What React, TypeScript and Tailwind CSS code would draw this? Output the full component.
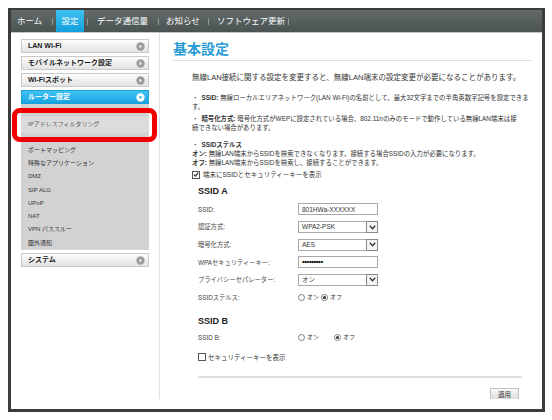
import React from 'react';

// Router admin page: 基本設定 (LAN Wi-Fi basic settings) with sidebar menu

function NavSep() {
  return (
    <div className="flex items-center">
      <span className="h-[7px] w-px bg-[#8e9696]" />
    </div>
  );
}

function MenuIcon({ active }: { active?: boolean }) {
  if (active) {
    return (
      <svg width="9" height="9" viewBox="0 0 10 10">
        <circle cx="5" cy="5" r="4.6" fill="#ffffff" />
        <path d="M2.8 4 L5 6.4 L7.2 4 Z" fill="#1aa7e4" />
      </svg>
    );
  }
  return (
    <svg width="9" height="9" viewBox="0 0 10 10">
      <circle cx="5" cy="5" r="4.6" fill="#9b9b9b" />
      <path d="M4 2.8 L6.4 5 L4 7.2 Z" fill="#ffffff" />
    </svg>
  );
}

function MenuItem({ label, active }: { label: string; active?: boolean }) {
  return (
    <div
      className={
        active
          ? 'flex h-[14px] items-center justify-between border border-[#1b9fd8] bg-gradient-to-b from-[#3fc4f3] to-[#15a4e2] pl-[6px] pr-[3px] text-[7px] font-bold text-white'
          : 'flex h-[14px] items-center justify-between border border-[#cacaca] bg-gradient-to-b from-[#fcfcfc] to-[#e3e3e3] pl-[6px] pr-[3px] text-[7px] font-bold text-[#1a1a1a]'
      }
    >
      <span>{label}</span>
      <MenuIcon active={active} />
    </div>
  );
}

const subItems = ['ポートマッピング', '特殊なアプリケーション', 'DMZ', 'SIP ALG', 'UPnP', 'NAT', 'VPN パススルー', '圏外通知'];

function Radio({ checked }: { checked?: boolean }) {
  return (
    <span className="flex h-[7px] w-[7px] items-center justify-center rounded-full border border-[#808080] bg-white">
      {checked && <span className="h-[3px] w-[3px] rounded-full bg-[#333]" />}
    </span>
  );
}

function Checkbox({ checked }: { checked?: boolean }) {
  return (
    <span className="flex h-[8px] w-[8px] shrink-0 items-center justify-center border border-[#555] bg-white">
      {checked && (
        <svg width="7" height="7" viewBox="0 0 8 8">
          <path d="M1 4 L3.2 6.2 L7 1.5" stroke="#222" strokeWidth="1.4" fill="none" />
        </svg>
      )}
    </span>
  );
}

function TextBox({ children }: { children: React.ReactNode }) {
  return (
    <div className="flex h-[12px] w-[80px] items-center border border-[#a9a9a9] bg-white pl-[3px] text-[6.5px] text-[#333]">
      {children}
    </div>
  );
}

function Select({ value }: { value: string }) {
  return (
    <div className="flex h-[12px] w-[80px] items-center justify-between border border-[#a9a9a9] bg-white pl-[3px] text-[6.5px] text-[#333]">
      <span>{value}</span>
      <span className="-mr-px flex h-[12px] w-[12px] items-center justify-center border border-[#8a8a8a] bg-[#f4f4f4]">
        <svg width="7" height="5" viewBox="0 0 7 5">
          <path d="M0.8 0.8 L3.5 3.8 L6.2 0.8" stroke="#333" strokeWidth="1.3" fill="none" />
        </svg>
      </span>
    </div>
  );
}

function Row({ label, children }: { label: string; children: React.ReactNode }) {
  return (
    <div className="flex h-[17.6px] items-center">
      <div className="w-[100px] text-[6.3px] text-[#444]">{label}</div>
      {children}
    </div>
  );
}

function RadioPair({ gap }: { gap: string }) {
  return (
    <div className="flex items-center text-[6px] text-[#333]">
      <Radio />
      <span className="ml-[2px]">オン</span>
      <span className={gap}>
        <Radio checked />
      </span>
      <span className="ml-[2px]">オフ</span>
    </div>
  );
}

export default function App() {
  return (
    <div className="h-[420px] w-[552px] bg-white p-[8px] font-['Liberation_Sans','Noto_Sans_CJK_JP',sans-serif]">
      <div className="flex h-[404px] w-[537px] flex-col border-x-[3px] border-b-[3px] border-t-2 border-[#3b3b3b]">
        {/* top navigation */}
        <nav className="flex h-[23px] shrink-0 items-stretch border-b border-[#c2c6c6] bg-gradient-to-b from-[#636c6b] to-[#4a5352] text-[8.5px] text-white">
          <div className="flex w-[41px] items-center pl-[6px]">ホーム</div>
          <NavSep />
          <div className="w-[3px]" />
          <div className="flex w-[28px] items-center justify-center bg-gradient-to-b from-[#3cc3f2] to-[#109fdc]">設定</div>
          <div className="w-[3px]" />
          <NavSep />
          <div className="flex w-[70px] items-center pl-[9px]">データ通信量</div>
          <NavSep />
          <div className="flex w-[49px] items-center pl-[7px]">お知らせ</div>
          <NavSep />
          <div className="flex w-[79px] items-center pl-[8px]">ソフトウェア更新</div>
          <NavSep />
        </nav>

        <div className="flex min-h-0 flex-1 pb-[10px]">
          {/* side menu */}
          <aside className="w-[149px] shrink-0 border-r border-[#e2e2e2] px-[10px] pt-[6px]">
            <div className="flex flex-col gap-[3px]">
              <MenuItem label="LAN Wi-Fi" />
              <MenuItem label="モバイルネットワーク設定" />
              <MenuItem label="Wi-Fiスポット" />
              <div>
                <MenuItem label="ルーター設定" active />
                <div className="relative h-[146px] bg-[#d2d2d2] pt-[12px]">
                  <div className="flex h-[17px] items-center bg-[#dcdcdc] pl-[7px] text-[6px] text-[#555]">
                    IPアドレスフィルタリング
                  </div>
                  <div className="mt-[10.5px] flex flex-col">
                    {subItems.map((s) => (
                      <div key={s} className="flex h-[13.3px] items-center pl-[7px] text-[6px] text-[#333]">
                        {s}
                      </div>
                    ))}
                  </div>
                  <div className="absolute left-[-9px] top-[4px] h-[34px] w-[145px] rounded-[8px] border-[5px] border-[#f20000]" />
                </div>
              </div>
              <MenuItem label="システム" />
            </div>
          </aside>

          {/* main content */}
          <main className="min-w-0 flex-1 overflow-hidden pl-[13px] pr-[10px] pt-[8px] text-[#333]">
            <h1 className="text-[14px] font-bold leading-[16px] text-[#2a9bd7]">基本設定</h1>
            <div className="mt-[3px] h-px bg-[#e0e0e0]" />

            <div className="pl-[19px] text-[6.4px] leading-[9px]">
              <p className="mt-[12px] whitespace-nowrap text-[7.5px]">
                無線LAN接続に関する設定を変更すると、無線LAN端末の設定変更が必要になることがあります。
              </p>
              <div className="mt-[11px] whitespace-nowrap">
                <div>
                  <span className="mr-[3px]">・</span>
                  <b>SSID:</b> 無線ローカルエリアネットワーク(LAN Wi-Fi)の名前として、最大32文字までの半角英数字記号を設定できま
                </div>
                <div>す。</div>
              </div>
              <div className="mt-[3px] whitespace-nowrap">
                <div>
                  <span className="mr-[3px]">・</span>
                  <b>暗号化方式:</b> 暗号化方式がWEPに設定されている場合、802.11nのみのモードで動作している無線LAN端末は接
                </div>
                <div>続できない場合があります。</div>
              </div>
              <div className="mt-[8px] whitespace-nowrap">
                <div>
                  <span className="mr-[3px]">・</span>
                  <b>SSIDステルス</b>
                </div>
                <div>
                  <b>オン:</b> 無線LAN端末からSSIDを検索できなくなります。接続する場合SSIDの入力が必要になります。
                </div>
                <div>
                  <b>オフ:</b> 無線LAN端末からSSIDを検索し、接続することができます。
                </div>
              </div>
              <div className="mt-[3px] flex h-[9px] items-center gap-[3px] whitespace-nowrap text-[6.5px]">
                <Checkbox checked />
                <span>端末にSSIDとセキュリティーキーを表示</span>
              </div>
            </div>

            <div className="pl-[25px] pr-[10px]">
              <h2 className="mt-[7px] text-[9px] font-bold leading-[11px] text-[#222]">SSID A</h2>
              <div className="mt-[3.7px] flex flex-col">
                <Row label="SSID:">
                  <TextBox>801HWa-XXXXXX</TextBox>
                </Row>
                <Row label="認証方式:">
                  <Select value="WPA2-PSK" />
                </Row>
                <Row label="暗号化方式:">
                  <Select value="AES" />
                </Row>
                <Row label="WPAセキュリティーキー:">
                  <TextBox>
                    <span className="text-[8px] font-bold tracking-[-0.5px] text-[#111]">•••••••••</span>
                  </TextBox>
                </Row>
                <Row label="プライバシーセパレーター:">
                  <Select value="オン" />
                </Row>
                <Row label="SSIDステルス:">
                  <RadioPair gap="ml-[2px]" />
                </Row>
              </div>

              <h2 className="mt-[9.7px] text-[9px] font-bold leading-[11px] text-[#222]">SSID B</h2>
              <div className="mt-[1.7px]">
                <Row label="SSID B:">
                  <RadioPair gap="ml-[15px]" />
                </Row>
              </div>
              <div className="mt-[6.7px] flex h-[9px] items-center gap-[2px] whitespace-nowrap text-[6.5px]">
                <Checkbox />
                <span>セキュリティーキーを表示</span>
              </div>
              <div className="mt-[14.5px] h-[2px] bg-[#e0e0e0]" />
              <div className="mt-[10px] flex justify-end pr-[3px]">
                <button className="flex h-[13px] w-[29px] items-center justify-center border border-[#c2c2c2] bg-gradient-to-b from-[#fafafa] to-[#dadada] text-[6.5px] text-[#333]">
                  適用
                </button>
              </div>
            </div>
          </main>
        </div>
      </div>
    </div>
  );
}
